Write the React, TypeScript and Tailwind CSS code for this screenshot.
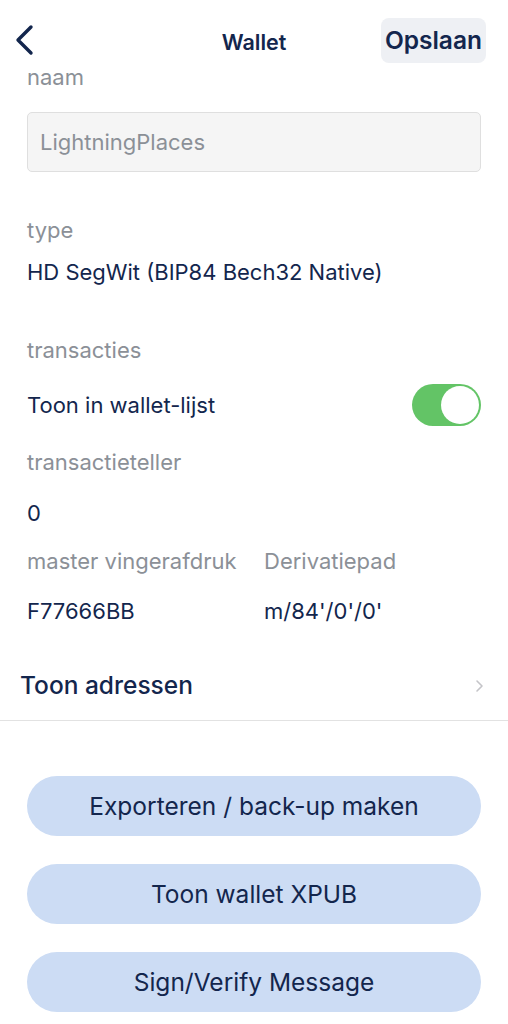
const navy = "text-[#13264d]";

const Label = ({ children }: { children: React.ReactNode }) => (
  <div className="text-[22px] leading-[24px] text-[#8b9097]">{children}</div>
);

const Value = ({ children }: { children: React.ReactNode }) => (
  <div className={`text-[22px] leading-[24px] ${navy}`}>{children}</div>
);

const ActionButton = ({ title }: { title: string }) => (
  <button className={`h-[60px] w-full rounded-full bg-[#ccdcf4] text-[24.5px] ${navy}`}>
    {title}
  </button>
);

export default function App() {
  return (
    <div
      className="min-h-screen w-[508px] bg-white"
      style={{ fontFamily: "Inter, 'Noto Sans', sans-serif" }}
    >
      {/* header */}
      <div className="grid h-[80px] grid-cols-[1fr_auto_1fr] items-start pl-[14px] pr-[22px] pt-[18px]">
        <button className="mt-[6px] h-[30px] w-[20px]">
          <svg width="20" height="32" viewBox="0 0 20 32" fill="none">
            <path
              d="M17 3 L4 16 L17 29"
              stroke="#13264d"
              strokeWidth="3.4"
              strokeLinecap="round"
              strokeLinejoin="round"
            />
          </svg>
        </button>
        <div className={`mt-[8px] translate-x-[4px] text-[21.5px] font-semibold ${navy}`}>Wallet</div>
        <div className="flex justify-end">
          <button
            className={`h-[45px] rounded-[8px] bg-[#eef0f4] px-[4px] text-[24.5px] font-semibold ${navy}`}
          >
            Opslaan
          </button>
        </div>
      </div>

      <div className="-mt-[15px] px-[27px]">
        <Label>naam</Label>
        <div className="mt-[23px] flex h-[60px] items-center rounded-[5px] border border-[#dfdfdf] bg-[#f5f5f5] px-[12px] text-[22px] text-[#8b9097]">
          LightningPlaces
        </div>

        <div className="mt-[46px]">
          <Label>type</Label>
        </div>
        <div className="mt-[18px]">
          <Value>HD SegWit (BIP84 Bech32 Native)</Value>
        </div>

        <div className="mt-[54px]">
          <Label>transacties</Label>
        </div>
        <div className="mt-[22px] flex items-center justify-between">
          <Value>Toon in wallet-lijst</Value>
          <div className="flex h-[42px] w-[69px] items-center justify-end rounded-full bg-[#63c466] px-[2px]">
            <div className="h-[38px] w-[38px] rounded-full bg-white" />
          </div>
        </div>

        <div className="mt-[24px]">
          <Label>transactieteller</Label>
        </div>
        <div className="mt-[27px]">
          <Value>0</Value>
        </div>

        <div className="mt-[24px] flex">
          <div className="w-[237px]">
            <Label>master vingerafdruk</Label>
            <div className="mt-[26px]">
              <Value>F77666BB</Value>
            </div>
          </div>
          <div>
            <Label>Derivatiepad</Label>
            <div className="mt-[26px]">
              <Value>m/84'/0'/0'</Value>
            </div>
          </div>
        </div>
      </div>

      <div className="mt-[28px] flex h-[70px] items-center justify-between border-b border-[#e2e2e2] pl-[20px] pr-[24px]">
        <span className={`text-[24.5px] font-medium ${navy}`}>Toon adressen</span>
        <svg width="10" height="14" viewBox="0 0 10 14" fill="none">
          <path
            d="M3 2 L8 7 L3 12"
            stroke="#c4c4c8"
            strokeWidth="1.6"
            strokeLinecap="round"
            strokeLinejoin="round"
          />
        </svg>
      </div>

      <div className="mt-[55px] flex flex-col gap-[28px] px-[27px]">
        <ActionButton title="Exporteren / back-up maken" />
        <ActionButton title="Toon wallet XPUB" />
        <ActionButton title="Sign/Verify Message" />
      </div>
    </div>
  );
}
